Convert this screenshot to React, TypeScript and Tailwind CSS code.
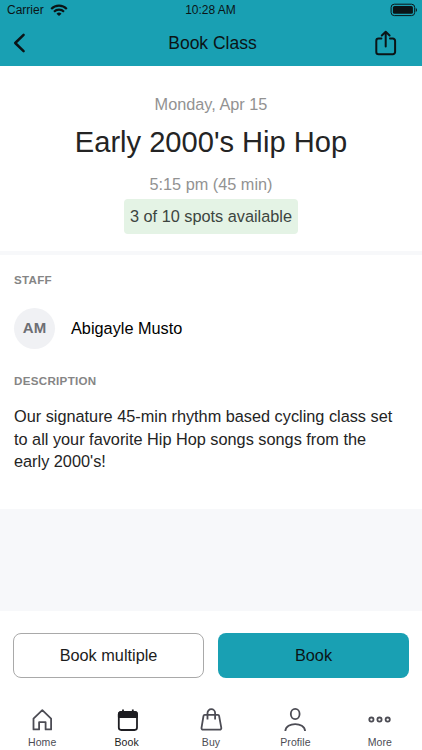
import React from 'react';

const StatusBar: React.FC = () => (
  <div className="flex h-5 items-center text-[12px] leading-5">
    <div className="flex flex-1 items-center pl-[7px]">
      <span>Carrier</span>
      <svg className="ml-[6px]" width="18" height="13" viewBox="0 0 18 13" fill="none" stroke="currentColor" strokeWidth="2.1">
        <path d="M1.2 4.9a11 11 0 0 1 15.6 0" />
        <path d="M4 7.7a7 7 0 0 1 10 0" />
        <path d="M9 12.1 6.5 9.7a3.6 3.6 0 0 1 5 0z" fill="currentColor" stroke="none" />
      </svg>
    </div>
    <span className="-ml-[4px] -mt-px">10:28 AM</span>
    <div className="flex flex-1 justify-end pr-[4px]">
      <svg width="28" height="14" viewBox="0 0 28 14" fill="none">
        <rect x="1.1" y="1.2" width="23.6" height="11.4" rx="3.2" stroke="currentColor" strokeWidth="1" />
        <rect x="2.9" y="3" width="20" height="7.8" rx="1.6" fill="currentColor" />
        <path d="M25.8 4.9c1.6.5 1.6 3.5 0 4z" fill="currentColor" />
      </svg>
    </div>
  </div>
);

const NavBar: React.FC = () => (
  <div className="flex flex-1 items-center justify-between">
    <button type="button" aria-label="Back" className="flex w-20 pl-[12px]">
      <svg width="16" height="22" viewBox="0 0 16 22" fill="none" stroke="currentColor" strokeWidth="2.5" strokeLinecap="round" strokeLinejoin="round">
        <path d="M11.6 2.8 3.2 11l8.4 8.2" />
      </svg>
    </button>
    <h1 className="ml-[3px] text-[17.5px]">Book Class</h1>
    <button type="button" aria-label="Share" className="flex w-20 justify-end pr-[24px]">
      <svg width="24" height="26" viewBox="0 0 24 26" fill="none" stroke="currentColor" strokeWidth="2" strokeLinecap="round" strokeLinejoin="round">
        <path d="M7.4 8.6H4.6a2.3 2.3 0 0 0-2.3 2.3v11a2.3 2.3 0 0 0 2.3 2.3h14.2a2.3 2.3 0 0 0 2.3-2.3v-11a2.3 2.3 0 0 0-2.3-2.3H16" />
        <path d="M11.7 16.5V2M7.8 5.5l3.9-3.7 3.9 3.7" />
      </svg>
    </button>
  </div>
);

const SectionTitle: React.FC<{ children: React.ReactNode }> = ({ children }) => (
  <h3 className="text-[11.6px] font-bold leading-4 tracking-[0.3px] text-[#858585]">{children}</h3>
);

const tabs = [
  {
    label: 'Home',
    icon: <path d="M3.5 11.7 12.3 3.2l8.8 8.5v10.7h-5.5v-7.2H9.1v7.2H3.5z" />,
  },
  {
    label: 'Book',
    active: true,
    icon: (
      <>
        <rect x="4.8" y="5.2" width="18.2" height="17.8" rx="2.4" />
        <path d="M4.8 10V7a2 2 0 0 1 2-2h14.2a2 2 0 0 1 2 2v3z" fill="currentColor" />
        <path d="M9 2.5V6M18.8 2.5V6" />
      </>
    ),
  },
  {
    label: 'Buy',
    icon: (
      <>
        <path d="M5.7 7.9h13.2a1.200 1.200 0 0 1 1.200 1l2.200 11.900a1.600 1.600 0 0 1-1.600 1.900H4.100a1.600 1.600 0 0 1-1.600-1.900L4.500 8.900a1.200 1.200 0 0 1 1.200-1z" />
        <path d="M8.500 12.600V6a3.800 3.800 0 0 1 7.600 0v6.600" />
      </>
    ),
  },
  {
    label: 'Profile',
    icon: (
      <>
        <ellipse cx="12.2" cy="7" rx="4.4" ry="5.1" />
        <path d="M2.3 24c.6-9.3 19.2-9.3 19.8 0" />
      </>
    ),
  },
  {
    label: 'More',
    icon: (
      <>
        <circle cx="4.4" cy="12.6" r="2.1" />
        <circle cx="12.5" cy="12.6" r="2.1" />
        <circle cx="20.7" cy="12.6" r="2.1" />
      </>
    ),
  },
];

const TabBar: React.FC = () => (
  <nav className="flex justify-between pt-[29px]">
    {tabs.map(({ label, icon, active }) => (
      <button
        key={label}
        type="button"
        className={`flex flex-1 flex-col items-center ${active ? 'text-[#1d1d22]' : 'text-[#4c4c54]'}`}
      >
        <svg width="25" height="25" viewBox="0 0 25 25" fill="none" stroke="currentColor" strokeWidth="1.8" strokeLinejoin="round">
          {icon}
        </svg>
        <span className="mt-[3px] text-[10.5px] leading-[14px] tracking-[0.1px]">{label}</span>
      </button>
    ))}
  </nav>
);

export default function App() {
  return (
    <div className="flex h-[750px] w-[422px] flex-col overflow-hidden bg-[#f7f8fa] font-['Liberation_Sans',Arial,sans-serif] text-[16.3px]">
      <header className="flex h-[66px] flex-col bg-[#19a0b3] text-[#0b1416]">
        <StatusBar />
        <NavBar />
      </header>

      <section className="flex h-[185px] flex-col items-center bg-white pt-[27px]">
        <p className="leading-[22px] text-[#929292]">Monday, Apr 15</p>
        <h2 className="mt-[9px] text-[29.1px] leading-[36px] text-[#242424]">Early 2000's Hip Hop</h2>
        <p className="mt-[13px] leading-[22px] text-[#929292]">5:15 pm (45 min)</p>
        <span className="mt-[4px] flex h-[35px] w-[174px] items-center justify-center rounded-[4px] bg-[#e4f3e5] whitespace-nowrap text-[#3c4540]">
          3 of 10 spots available
        </span>
      </section>

      <section className="mt-[4px] flex h-[254px] flex-col bg-white px-[14px] pt-[17px]">
        <SectionTitle>STAFF</SectionTitle>
        <div className="mt-[20px] flex items-center gap-4">
          <div className="flex size-[41px] items-center justify-center rounded-full bg-[#f0f1f4] text-[15px] font-bold text-[#6d6e73]">
            AM
          </div>
          <span className="text-black">Abigayle Musto</span>
        </div>
        <div className="mt-[24px]">
          <SectionTitle>DESCRIPTION</SectionTitle>
        </div>
        <p className="mt-[16px] w-[384px] leading-[22.5px] text-[#242424]">
          Our signature 45-min rhythm based cycling class set to all your favorite Hip Hop songs songs from the early 2000's!
        </p>
      </section>

      <footer className="mt-auto h-[139px] bg-white pt-[22px]">
        <div className="flex justify-between px-[13px]">
          <button type="button" className="h-[45px] w-[191px] rounded-[8px] border border-[#a9a9a9] text-[#1c1c1c]">
            Book multiple
          </button>
          <button type="button" className="h-[45px] w-[191px] rounded-[8px] bg-[#19a0b3] text-[#0b1416]">
            Book
          </button>
        </div>
        <TabBar />
      </footer>
    </div>
  );
}
